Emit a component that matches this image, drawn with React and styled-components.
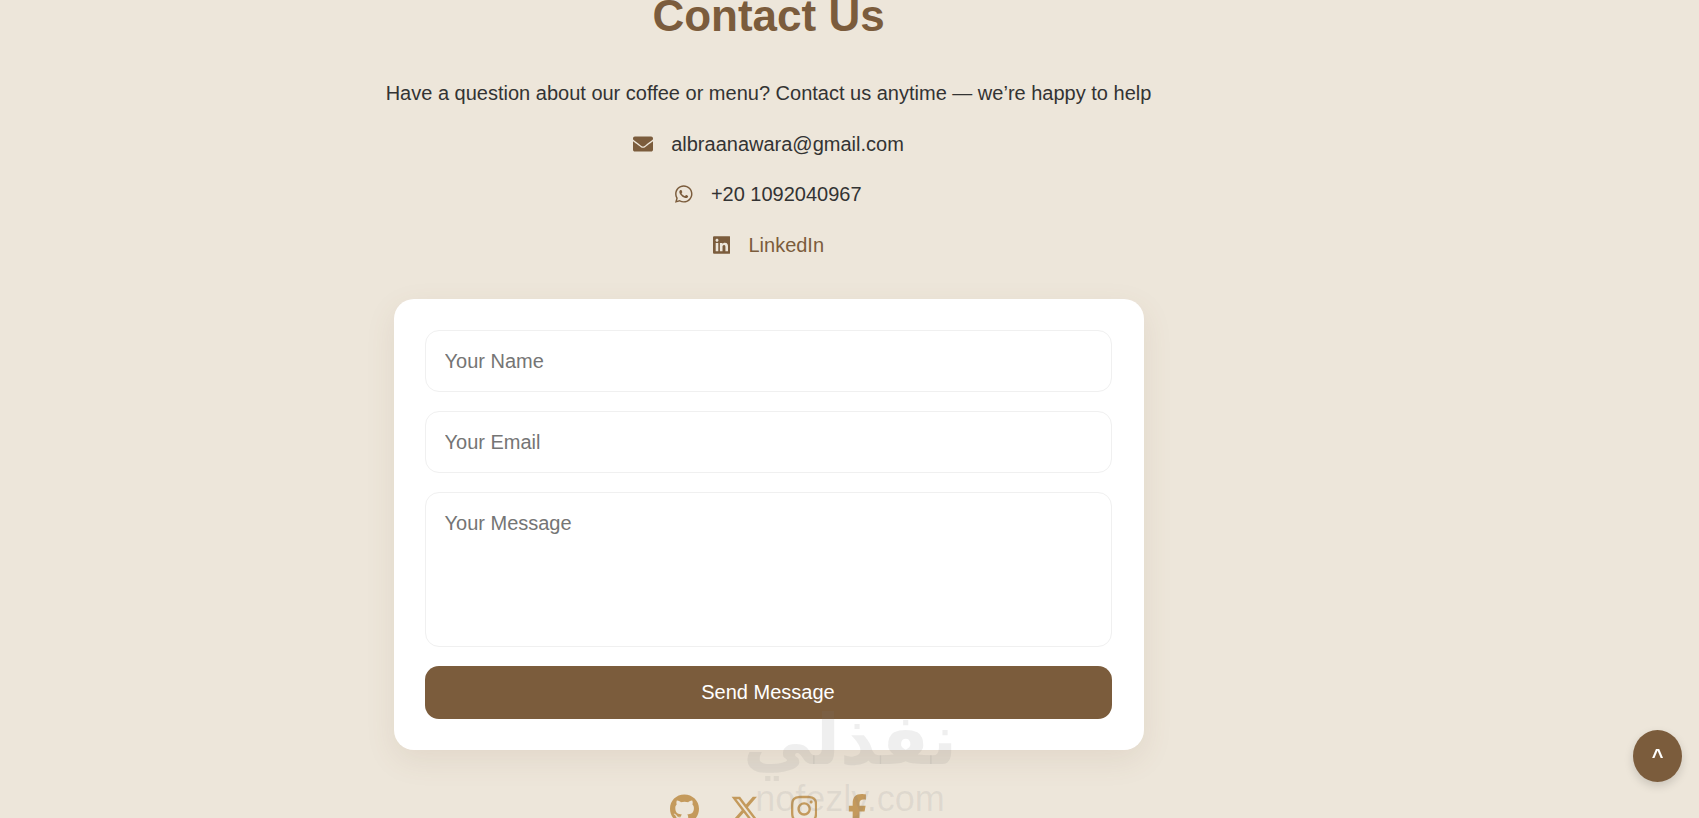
import { createGlobalStyle } from "styled-components";
import styled from "styled-components";
import { FaEnvelope, FaWhatsapp, FaLinkedin } from "react-icons/fa";
import { FaGithub, FaXTwitter, FaInstagram, FaFacebookF } from "react-icons/fa6";

const GlobalStyle = createGlobalStyle`
  html, body {
    margin: 0;
    height: 100%;
    overflow: hidden;
    background: #ede6da;
    font-family: "Liberation Sans", Arial, sans-serif;
  }
`;

const App = () => {
  return (
    <Page>
      <GlobalStyle />
      <Title>Contact Us</Title>
      <Intro>Have a question about our coffee or menu? Contact us anytime — we’re happy to help</Intro>
      <ContactLine>
        <MailIcon />
        <span>albraanawara@gmail.com</span>
      </ContactLine>
      <ContactLine>
        <PhoneIcon />
        <span>+20 1092040967</span>
      </ContactLine>
      <ContactLine $link>
        <LinkedinIcon />
        <span>LinkedIn</span>
      </ContactLine>
      <FormCard>
        <Field placeholder="Your Name" />
        <Field placeholder="Your Email" />
        <MessageField placeholder="Your Message" />
        <SendButton>Send Message</SendButton>
      </FormCard>
      <Socials>
        <GithubIcon />
        <XIcon />
        <InstagramIcon />
        <FacebookIcon />
      </Socials>
      <Watermark>
        <WatermarkLogo>نفذلي</WatermarkLogo>
        <WatermarkUrl>nofezly.com</WatermarkUrl>
      </Watermark>
      <TopButton>^</TopButton>
    </Page>
  );
};

const Page = styled.div`
  width: 1537px;
  height: 818px;
  display: flex;
  flex-direction: column;
  align-items: center;
  color: #333333;
`;

const Title = styled.h2`
  margin: -9px 0 0;
  font-size: 44px;
  line-height: 50px;
  font-weight: 700;
  color: #7b5c3c;
`;

const Intro = styled.p`
  margin: 37px 0 0;
  font-size: 20px;
  line-height: 30px;
  white-space: nowrap;
`;

const ContactLine = styled.div`
  margin-top: 20.5px;
  display: flex;
  align-items: center;
  gap: 18px;
  font-size: 20px;
  line-height: 30px;
  color: ${(props) => (props.$link ? "#7b5c3c" : "#333333")};

  svg {
    height: 20px;
    color: #7b5c3c;
  }
`;

const MailIcon = styled(FaEnvelope)`
  width: 20px;
`;

const PhoneIcon = styled(FaWhatsapp)`
  width: 17.5px;
`;

const LinkedinIcon = styled(FaLinkedin)`
  width: 17.5px;
`;

const FormCard = styled.form`
  margin-top: 39.5px;
  width: 750px;
  box-sizing: border-box;
  padding: 31px 32px 31px 31px;
  display: flex;
  flex-direction: column;
  gap: 19px;
  background: #fff;
  border-radius: 20px;
  box-shadow: 0 10px 30px rgba(123, 92, 60, 0.1);
`;

const Field = styled.input`
  box-sizing: border-box;
  width: 100%;
  height: 62px;
  padding: 0 19px;
  border: 1px solid #f0f0f0;
  border-radius: 14px;
  font-family: inherit;
  font-size: 20px;
  outline: none;

  &::placeholder {
    color: #757575;
  }
`;

const MessageField = styled.textarea`
  box-sizing: border-box;
  width: 100%;
  height: 155px;
  padding: 19px;
  border: 1px solid #f0f0f0;
  border-radius: 14px;
  font-family: inherit;
  font-size: 20px;
  line-height: 23px;
  resize: none;
  outline: none;

  &::placeholder {
    color: #757575;
  }
`;

const SendButton = styled.button`
  height: 53px;
  border: none;
  border-radius: 14px;
  background: #7b5c3c;
  color: #fff;
  font-family: inherit;
  font-size: 20px;
`;

const Socials = styled.div`
  margin-top: 44px;
  display: flex;
  align-items: center;
  gap: 31px;
  color: #c49a5c;

  svg {
    height: 30px;
  }
`;

const GithubIcon = styled(FaGithub)`
  width: 29px;
`;

const XIcon = styled(FaXTwitter)`
  width: 30px;
`;

const InstagramIcon = styled(FaInstagram)`
  width: 26.25px;
`;

const FacebookIcon = styled(FaFacebookF)`
  width: 18.75px;
`;

const Watermark = styled.div`
  position: absolute;
  left: 740px;
  top: 705px;
  width: 220px;
  text-align: center;
  color: rgba(120, 120, 125, 0.12);
  pointer-events: none;
`;

const WatermarkLogo = styled.div`
  font-family: "DejaVu Sans", sans-serif;
  font-size: 70px;
  font-weight: 700;
  line-height: 70px;
  white-space: nowrap;
`;

const WatermarkUrl = styled.div`
  font-size: 36px;
  line-height: 36px;
  margin-top: 6px;
`;

const TopButton = styled.button`
  position: fixed;
  left: 1633px;
  top: 730px;
  width: 49px;
  height: 52px;
  border: none;
  border-radius: 50%;
  background: #7b5c3c;
  color: #fff;
  font-family: inherit;
  font-size: 20px;
  font-weight: 700;
  box-shadow: 0 4px 10px rgba(0, 0, 0, 0.15);
`;

export default App;
